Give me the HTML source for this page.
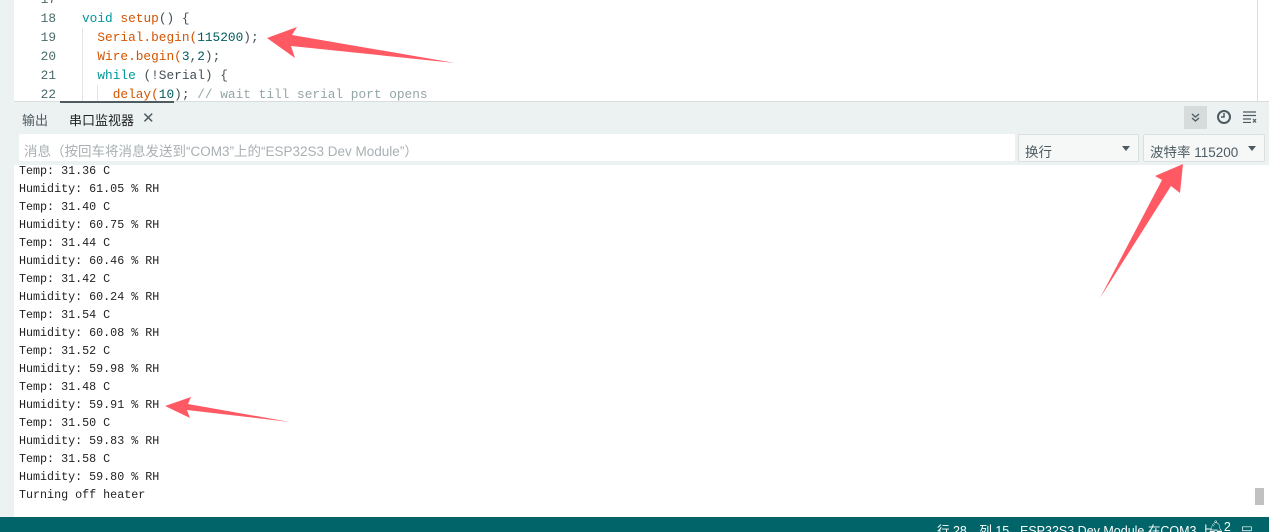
<!DOCTYPE html>
<html><head><meta charset="utf-8"><style>
*{margin:0;padding:0;box-sizing:border-box}
body{width:1269px;height:532px;overflow:hidden;background:#fff;position:relative;font-family:"Liberation Sans","Noto Sans CJK SC",sans-serif}
.strip{position:absolute;left:0;top:0;width:14px;height:517px;background:#ecf1f1}
.code{position:absolute;left:14px;top:0;width:1243px;height:101px;background:#fff;overflow:hidden;font-family:"Liberation Mono",monospace;font-size:12.8px}
.ln{position:absolute;left:14px;width:28px;text-align:right;color:#4a6a6a}
.cl{position:absolute;left:68px;white-space:pre}
.k{color:#00979c}.f{color:#d35400}.n{color:#005c5f}.c{color:#95a5a6}.p{color:#434f54}
.vsep{position:absolute;left:1257px;top:0;width:1px;height:101px;background:#ddd}
.hdr{position:absolute;left:14px;top:101px;width:1255px;height:63px;background:#ecf1f1;border-top:1px solid #d8dede}
.tab{position:absolute;top:8px;font-size:13px;color:#4e5b61}
.uline{position:absolute;left:46px;top:-1px;width:114px;height:2px;background:#4e5b61}
.inp{position:absolute;left:5px;top:32px;width:996px;height:27px;background:#fff;border-radius:2px;font-size:13.5px;color:#a9b0b3;padding:6px 0 0 5px}
.sel{position:absolute;top:32px;height:28px;background:#f6f8f8;border:1px solid #dae0e0;border-radius:2px;font-size:13.5px;color:#4e5b61;padding:6px 0 0 6px}
.tri{position:absolute;right:8px;top:11px;width:0;height:0;border-left:4px solid transparent;border-right:4px solid transparent;border-top:5px solid #4e5b61}
.out{position:absolute;left:19px;top:162px;font-family:"Liberation Mono",monospace;font-size:11.7px;line-height:18px;color:#222;white-space:pre}
.status{position:absolute;left:0;top:517px;width:1269px;height:15px;background:#006468;color:#fff;font-size:12.5px;overflow:hidden}
.status span{position:absolute;top:3px;white-space:pre}
.sb{position:absolute;left:1255px;top:488px;width:9px;height:17px;background:#c1c1c1}
</style></head><body>
<div class="strip"></div>
<div class="code">
<div class="ln" style="top:-8px">17</div>
<div class="ln" style="top:11px">18</div><div class="cl" style="top:11px"><span class="k">void</span> <span class="f">setup</span><span class="p">() {</span></div>
<div class="ln" style="top:30px">19</div><div class="cl" style="top:30px">  <span class="f">Serial.begin(</span><span class="n">115200</span><span class="p">);</span></div>
<div class="ln" style="top:49px">20</div><div class="cl" style="top:49px">  <span class="f">Wire.begin(</span><span class="n">3</span><span class="p">,</span><span class="n">2</span><span class="p">);</span></div>
<div class="ln" style="top:68px">21</div><div class="cl" style="top:68px">  <span class="k">while</span> <span class="p">(!Serial) {</span></div>
<div class="ln" style="top:87px">22</div><div class="cl" style="top:87px">    <span class="f">delay(</span><span class="n">10</span><span class="p">);</span> <span class="c">// wait till serial port opens</span></div>
<div style="position:absolute;left:68px;top:28px;width:1px;height:75px;background:#e4e4e4"></div>
<div style="position:absolute;left:83px;top:85px;width:1px;height:20px;background:#e4e4e4"></div>
</div>
<div class="vsep"></div>
<div class="hdr">
<div class="uline"></div>
<div class="tab" style="left:8px">输出</div>
<div class="tab" style="left:55px;color:#222">串口监视器</div>
<div class="tab" style="left:128px;font-size:15px;top:7px">✕</div>
<div style="position:absolute;left:1170px;top:4px;width:23px;height:23px;background:#d6dbdb"><svg width="23" height="23"><path d="M8 8l3.5 3 3.5-3M8 12l3.5 3 3.5-3" fill="none" stroke="#4e5b61" stroke-width="1.3"/></svg></div>
<svg style="position:absolute;left:1202px;top:7px" width="16" height="16"><circle cx="8" cy="8" r="6" fill="none" stroke="#4e5b61" stroke-width="2"/><path d="M8 4v4h-3" fill="none" stroke="#4e5b61" stroke-width="1.5"/></svg>
<svg style="position:absolute;left:1228px;top:9px" width="16" height="12"><path d="M1 1h13M1 4.5h13M1 8h8M1 11.5h8M11 8l3 3.5M14 8l-3 3.5" stroke="#4e5b61" stroke-width="1.2" fill="none"/></svg>
<div class="inp">消息（按回车将消息发送到“COM3”上的“ESP32S3 Dev Module”）</div>
<div class="sel" style="left:1004px;width:121px">换行<div class="tri"></div></div>
<div class="sel" style="left:1129px;width:122px">波特率 115200<div class="tri"></div></div>
</div>
<div class="out">Temp: 31.36 C
Humidity: 61.05 % RH
Temp: 31.40 C
Humidity: 60.75 % RH
Temp: 31.44 C
Humidity: 60.46 % RH
Temp: 31.42 C
Humidity: 60.24 % RH
Temp: 31.54 C
Humidity: 60.08 % RH
Temp: 31.52 C
Humidity: 59.98 % RH
Temp: 31.48 C
Humidity: 59.91 % RH
Temp: 31.50 C
Humidity: 59.83 % RH
Temp: 31.58 C
Humidity: 59.80 % RH
Turning off heater</div>
<div style="position:absolute;left:14px;top:164px;width:1255px;height:1px;background:#ecf1f1"></div>
<div class="sb"></div>
<svg style="position:absolute;left:0;top:0" width="1269" height="532">
<polygon points="267,38 297,27 292,35 455,63 291,46 295,58" fill="#ff5a64"/>
<polygon points="1100,298 1162,180 1155,176 1183,164 1180,193 1171,186" fill="#ff5a64"/>
<polygon points="165,406 191,397 188,404 290,422 187,410 190,418" fill="#ff5a64"/>
</svg>
<div class="status">
<span style="left:937px">行 28，列 15</span>
<span style="left:1020px">ESP32S3 Dev Module 在COM3 上</span>
<span style="left:1208px">🔔︎2</span>
<span style="left:1241px">▭</span>
</div>
</body></html>
